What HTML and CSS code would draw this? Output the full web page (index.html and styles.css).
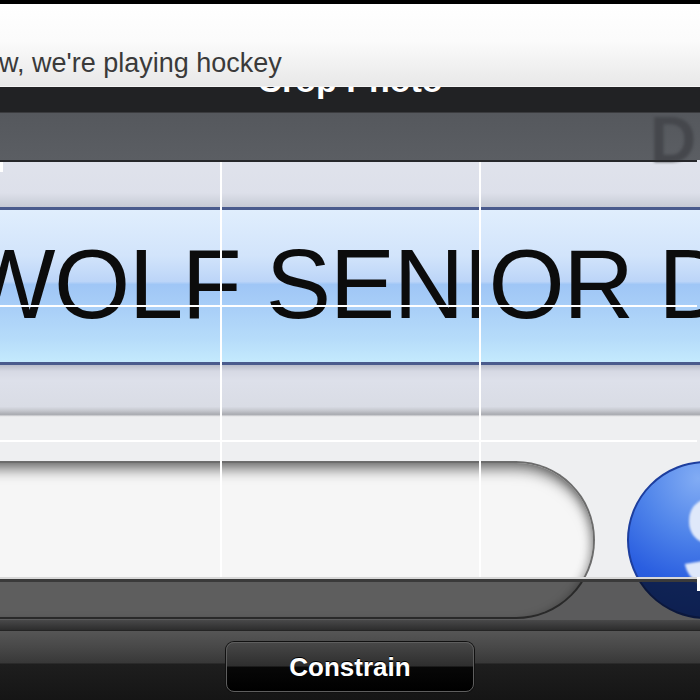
FILE: index.html
```html
<!DOCTYPE html>
<html lang="en">
<head>
    <meta charset="UTF-8">
    <meta name="viewport" content="width=device-width, initial-scale=1.0">
    <title>Crop Photo</title>
    <link rel="stylesheet" href="styles.css">
</head>
<body>

    <div class="tela">
        <div class="navbar">
            <h1>Crop Photo</h1>
        </div>

        <!-- Foto sendo recortada -->
        <div class="foto">
            <div class="faixa-cinza">
                <span class="letra-d">D</span>
            </div>
            <div class="faixa-topo"></div>
            <div class="placa">
                <span>WOLF SENIOR D</span>
            </div>
            <div class="faixa-baixo"></div>
            <div class="busca">
                <div class="campo"></div>
                <div class="botao-azul"><span>S</span></div>
            </div>

            <div class="escuro"></div>
            <div class="recorte">
                <i class="canto canto-esq"></i>
                <i class="canto canto-dir"></i>
            </div>
        </div>

        <div class="toolbar">
            <button class="constrain">Constrain</button>
        </div>
    </div>

    <!-- Notificação por cima de tudo -->
    <div class="banner">
        <p>w, we're playing hockey</p>
    </div>

</body>
</html>
```

FILE: styles.css
```css
* {
    margin: 0;
    padding: 0;
    box-sizing: border-box;
}

body {
    width: 700px;
    height: 700px;
    overflow: hidden;
    position: relative;
    background: #000;
    font-family: "Liberation Sans", Arial, sans-serif;
}

.tela {
    padding-top: 4px;
    display: flex;
    flex-direction: column;
}

/* Barra de título */
.navbar {
    height: 108px;
    background: #212224;
    display: flex;
    align-items: flex-end;
    justify-content: center;
    padding-bottom: 15px;
}

.navbar h1 {
    font-size: 34px;
    line-height: 34px;
    color: #fff;
    font-weight: bold;
    text-shadow: 0 -1px 0 rgba(0, 0, 0, 0.6);
}

/* Notificação */
.banner {
    position: absolute;
    top: 4px;
    left: 0;
    width: 700px;
    height: 83px;
    background: linear-gradient(#ffffff 0%, #fbfbfb 45%, #e8e8e8 100%);
    border-bottom: 1px solid #f4f4f4;
    padding-top: 46px;
    z-index: 10;
}

.banner p {
    font-size: 27px;
    line-height: 26px;
    color: #3a3a3a;
    margin-left: -1px;
    white-space: nowrap;
}

/* Foto */
.foto {
    position: relative;
    height: 518px;
    overflow: hidden;
    background: #eeeff1;
}

.faixa-cinza {
    height: 48px;
    background: linear-gradient(#55585d, #5b5e63);
    border-top: 1px solid #3a3b3e;
    position: relative;
}

.letra-d {
    position: absolute;
    left: 650px;
    top: -10px;
    font-size: 64px;
    font-weight: bold;
    color: #45474c;
    filter: blur(1.6px);
}

.faixa-topo {
    height: 47px;
    background: linear-gradient(#e0e3ec 0%, #dde0ea 70%, #c6cad5 100%);
}

.placa {
    height: 158px;
    border-top: 3px solid #4a5b8d;
    border-bottom: 3px solid #4a5b8d;
    background: linear-gradient(#e0eefd 0%, #d2e4fb 30%, #bcd5f8 47%, #9fc6f6 49%, #a6ccf7 60%, #b6dcfa 85%, #c4eafd 100%);
    padding-top: 25px;
    overflow: hidden;
}

.placa span {
    display: block;
    margin-left: -37px;
    font-size: 98px;
    line-height: 98px;
    letter-spacing: -1.5px;
    color: #0c0c0c;
    white-space: nowrap;
    filter: blur(0.5px);
}

.faixa-baixo {
    height: 52px;
    background: linear-gradient(#b9bdca 0%, #d6d9e4 12%, #dde0ea 30%, #d9dce5 80%, #c4c6cd 88%, #a9abb1 95%, #f6f6f7 100%);
}

.busca {
    height: 212px;
    display: flex;
    padding-top: 44px;
}

.campo {
    flex-shrink: 0;
    margin-left: -100px;
    width: 695px;
    height: 158px;
    background: #f6f6f6;
    border: 2px solid #6c6c6c;
    border-left: none;
    border-radius: 0 79px 79px 0;
    box-shadow: inset 0 10px 14px -4px rgba(0, 0, 0, 0.55), inset -6px 0 10px -4px rgba(0, 0, 0, 0.25);
}

.botao-azul {
    flex-shrink: 0;
    margin-left: 32px;
    width: 158px;
    height: 158px;
    border-radius: 50%;
    border: 2px solid #1d3e9e;
    background: radial-gradient(circle at 45% 10%, #82acf4 0%, #4f84ea 35%, #2a5ee0 65%, #1f4ccc 100%);
    overflow: hidden;
    position: relative;
}

.botao-azul span {
    position: absolute;
    left: 52px;
    top: 14px;
    font-size: 132px;
    line-height: 132px;
    font-weight: bold;
    color: #dfe8fa;
    filter: blur(1px);
}

/* Parte escurecida fora do recorte */
.escuro {
    position: absolute;
    left: 0;
    top: 470px;
    width: 700px;
    height: 48px;
    background: rgba(0, 0, 0, 0.62);
}

.escuro::after {
    content: "";
    position: absolute;
    left: 0;
    right: 0;
    bottom: 0;
    height: 10px;
    background: linear-gradient(rgba(30, 30, 30, 0.3), rgba(40, 40, 40, 0.9));
}

/* Moldura do recorte com grade */
.recorte {
    position: absolute;
    left: 0;
    top: 48px;
    width: 697px;
    height: 422px;
    border-top: 2px solid #26272a;
    border-bottom: 3px solid #3a3a3a;
    box-shadow: inset 0 -2px 0 #d8d8d8;
    background:
        linear-gradient(#fff, #fff) 220px 0 / 2px 100% no-repeat,
        linear-gradient(#fff, #fff) 479px 0 / 2px 100% no-repeat,
        linear-gradient(#fff, #fff) 0 143px / 100% 2px no-repeat,
        linear-gradient(#fff, #fff) 0 278px / 100% 2px no-repeat;
}

.canto {
    position: absolute;
    width: 3px;
    height: 10px;
    background: #fff;
}

.canto-esq {
    left: 0;
    top: 0;
}

.canto-dir {
    right: -3px;
    bottom: -12px;
    height: 14px;
}

/* Barra de baixo */
.toolbar {
    height: 70px;
    border-top: 1px solid #242424;
    background: linear-gradient(#565656 0%, #474747 25%, #383838 46%, #1e1e1e 48%, #151515 100%);
    display: flex;
    justify-content: center;
    padding-top: 11px;
}

.constrain {
    width: 248px;
    height: 50px;
    border: 1px solid #5e5e5e;
    border-radius: 8px;
    background: linear-gradient(#474747 0%, #2e2e2e 48%, #070707 50%, #000 100%);
    box-shadow: 0 0 0 1px #111;
    color: #fff;
    font-family: "Liberation Sans", Arial, sans-serif;
    font-size: 26px;
    font-weight: bold;
    text-shadow: 0 -1px 0 #000;
}
```
